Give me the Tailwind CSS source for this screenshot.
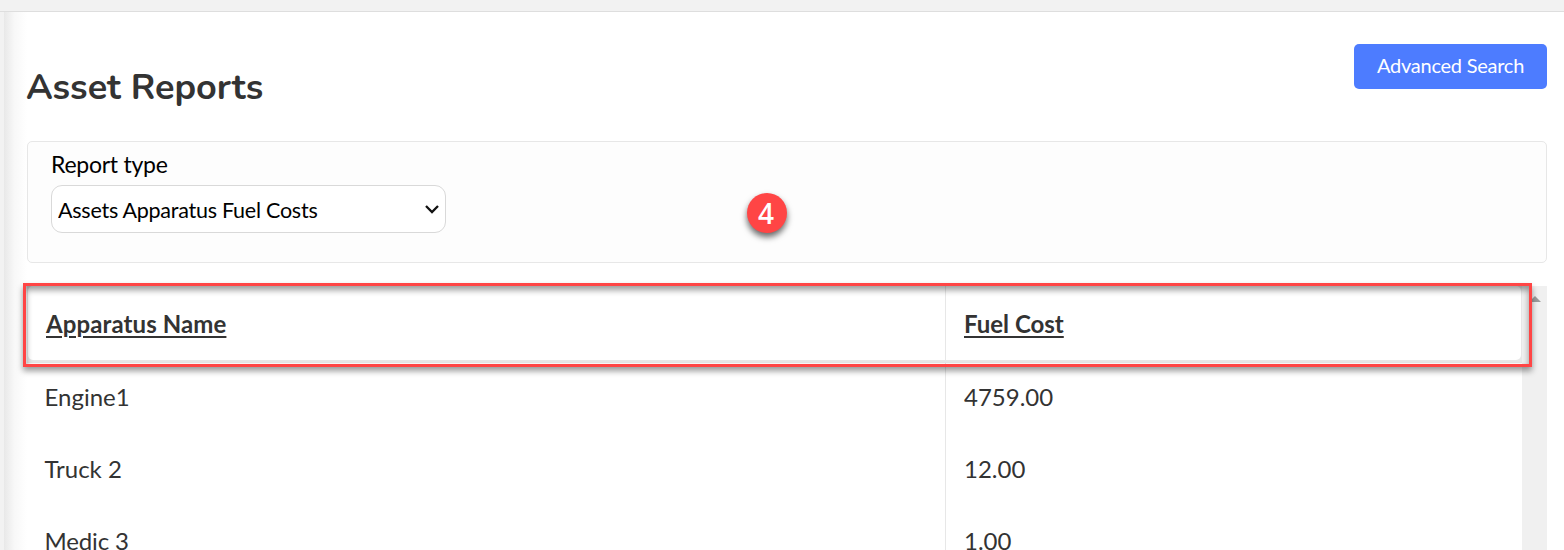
<!DOCTYPE html>
<html lang="en">
<head>
    <meta charset="UTF-8" />
    <meta name="viewport" content="width=device-width, initial-scale=1" />
    <title>Asset Reports</title>
    <script src="https://cdn.jsdelivr.net/npm/@tailwindcss/browser@4"></script>
</head>
<body class="relative h-[550px] overflow-hidden bg-white font-['Lato',sans-serif] text-[#333333] flex flex-col">
    <header class="h-3 shrink-0 bg-[#f2f2f2] border-b border-[#dedede]"></header>
    <div class="flex flex-1 min-h-0">
    <aside class="w-1 shrink-0 bg-[#f2f2f2]"></aside>
    <div class="w-[23px] shrink-0 bg-linear-to-r from-[#e8e8e8] via-[#f8f8f8] via-45% to-white"></div>
    <main class="w-[1520px] shrink-0">
        <div class="flex justify-between h-[129px] pt-8">
        <h1 class="mt-4 -ml-px h-14 leading-[56px] text-[36px] font-bold whitespace-nowrap font-['Nunito','Lato',sans-serif]">Asset Reports</h1>
        <button type="button" class="w-[193px] h-[45px] pb-1 rounded-[5px] bg-[#4d7cff] text-white text-[20px] tracking-[-0.25px]">Advanced Search</button>
        </div>
        <form class="h-[122px] rounded-[5px] border border-[#e7e7e7] bg-[#fdfdfd] pl-[23px] text-black">
        <label for="reportType" class="block h-[43px] pt-2 leading-7 text-[23px] tracking-[-0.25px]">Report type</label>
        <div class="relative w-[395px] h-12">
            <select id="reportType" class="appearance-none w-full h-full rounded-[11px] border border-[#d9d9d9] bg-white pl-1.5 pt-0.5 text-[21.5px] tracking-[-0.25px]">
            <option>Assets Apparatus Fuel Costs</option>
            </select>
            <svg class="absolute right-[7px] top-[19px] w-[14px] h-[11px]" viewBox="0 0 14 11" fill="none" stroke="#111" stroke-width="2.3">
            <path d="M1 2 L7 8 L13 2" />
            </svg>
        </div>
        </form>
        <section class="relative mt-[23px] flex h-[264px] overflow-hidden">
        <div class="w-[1495px]">
            <div class="grid grid-cols-[919px_1fr] h-[77px] bg-[#e7e7e7]">
            <div class="h-[74px] ml-px pl-[18px] pt-[21px] rounded-l-[5px] border-r border-[#e7e7e7] bg-white text-[24px] leading-[34px] font-bold tracking-[0.1px] underline underline-offset-[3px] decoration-2">Apparatus Name</div>
            <div class="h-[74px] mr-px pl-[18px] pt-[21px] rounded-r-[5px] bg-white text-[24px] leading-[34px] font-bold underline underline-offset-[3px] decoration-2">Fuel Cost</div>
            </div>
            <div class="grid grid-cols-[919px_1fr] auto-rows-[72px] text-[24px] leading-[68px]">
            <div class="pl-[17.5px] border-r border-[#e7e7e7]">Engine1</div>
            <div class="pl-[18px]">4759.00</div>
            <div class="pl-[17.5px] border-r border-[#e7e7e7]">Truck 2</div>
            <div class="pl-[18px]">12.00</div>
            <div class="pl-[17.5px] tracking-[-0.15px] border-r border-[#e7e7e7]">Medic 3</div>
            <div class="pl-[18px]">1.00</div>
            </div>
        </div>
        <div class="w-[25px] bg-[#f0f0f0]">
            <svg class="mt-[10px] ml-[7px] w-[12px] h-[6px]" viewBox="0 0 12 6" fill="#9b9b9b">
            <path d="M0 6 L6 0 L12 6 Z" />
            </svg>
        </div>
        </section>
    </main>
    </div>
    <!-- callout frame and step marker -->
    <div class="absolute left-[23px] top-[283px] w-[1509px] h-[84px] border-3 border-[#ff4545] shadow-[0_4px_6px_rgba(0,0,0,0.4),inset_0_4px_6px_rgba(0,0,0,0.4)]"></div>
    <div class="absolute left-[747px] top-[193px] size-10 rounded-full bg-[#ff4545] shadow-[0_4px_6px_rgba(0,0,0,0.6)] flex items-center justify-center pr-0.5 text-white text-[28px] font-semibold font-['Open_Sans',sans-serif]">4</div>
</body>
</html>
